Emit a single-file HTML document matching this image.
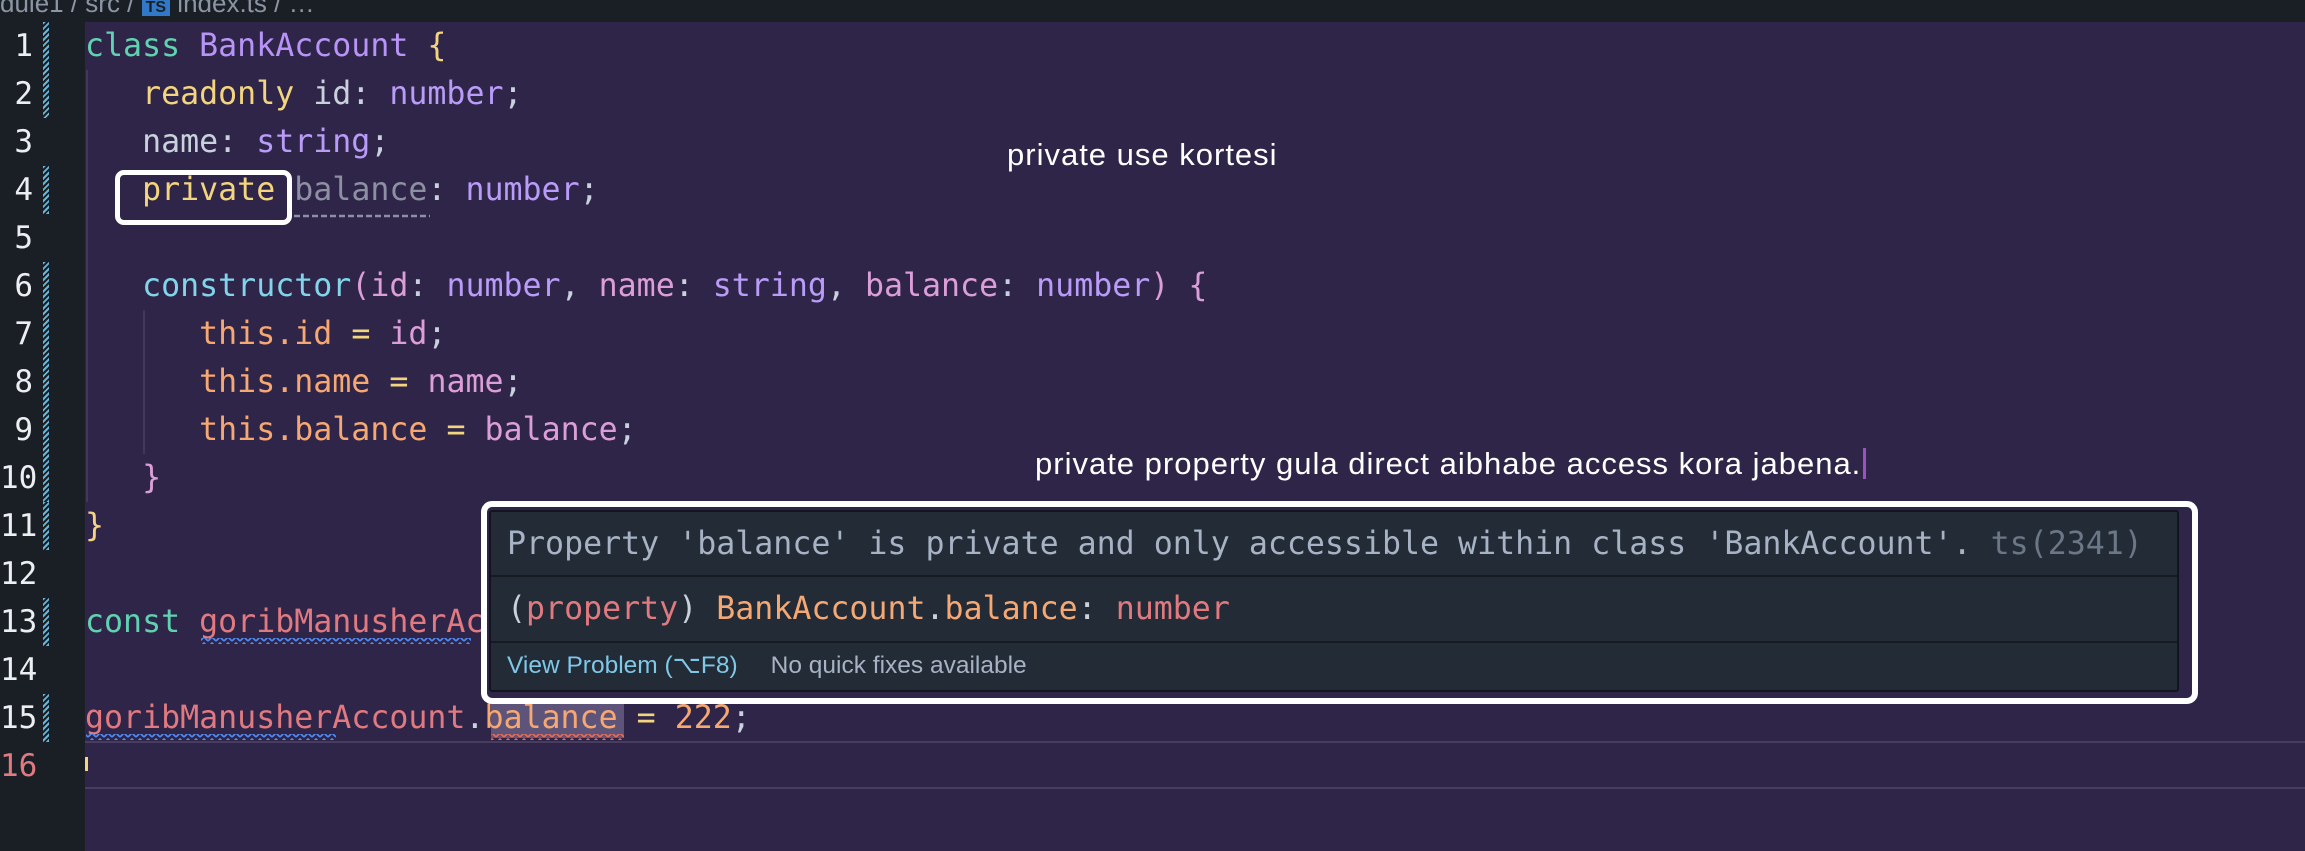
<!DOCTYPE html>
<html><head><meta charset="utf-8"><style>
*{margin:0;padding:0;box-sizing:border-box}
body{width:2305px;height:851px;overflow:hidden;background:#2f2549;position:relative;font-family:"DejaVu Sans Mono","Liberation Mono",monospace}
#bar{position:absolute;left:0;top:0;width:2305px;height:22px;background:#1a1f26;color:#8b95a3;font-family:"Liberation Sans",sans-serif;font-size:26px;line-height:6px;white-space:pre;overflow:hidden}
#gut{position:absolute;left:0;top:22px;width:85px;height:829px;background:#1a1f26}
.ln{position:absolute;left:0;width:33px;text-align:right;color:#eceff2;font-size:31px;line-height:48px;height:48px}
.hat{position:absolute;left:43px;width:6px;background:repeating-linear-gradient(135deg,#6bb6d8 0 2px,#1a1f26 2px 4px)}
.l{position:absolute;left:85px;font-size:31.6px;line-height:48px;height:48px;white-space:pre;color:#c8d1dc}
.kw{color:#5fd3b0}.cl{color:#b794f6}.y{color:#f2d57e}.ty{color:#b99cf8}.fa{color:#8d8fa3}.cy{color:#82d4ea}.pk{color:#dc9ed8}.or{color:#f6a873}.sa{color:#e07a80}
.guide{position:absolute;width:2px;background:#41385c}
.ann{position:absolute;color:#fff;font-family:"Liberation Sans",sans-serif;font-size:31px;letter-spacing:1px;white-space:pre}
</style></head><body>
<div id="bar">dule1 / src / <span style="background:#3178c6;color:#1a1f26;font-size:16px;padding:0 4px;font-weight:bold">TS</span> index.ts / …</div>
<div id="gut"></div>
<div class="ln" style="top:22px">1</div><div class="ln" style="top:70px">2</div><div class="ln" style="top:118px">3</div><div class="ln" style="top:166px">4</div><div class="ln" style="top:214px">5</div><div class="ln" style="top:262px">6</div><div class="ln" style="top:310px">7</div><div class="ln" style="top:358px">8</div><div class="ln" style="top:406px">9</div><div class="ln" style="top:454px">10</div><div class="ln" style="top:502px">11</div><div class="ln" style="top:550px">12</div><div class="ln" style="top:598px">13</div><div class="ln" style="top:646px">14</div><div class="ln" style="top:694px">15</div><div class="ln" style="top:742px;color:#e07a80">16</div>
<div class="hat" style="top:22px;height:96px"></div>
<div class="hat" style="top:166px;height:48px"></div>
<div class="hat" style="top:262px;height:240px"></div>
<div class="hat" style="top:502px;height:48px"></div>
<div class="hat" style="top:598px;height:48px"></div>
<div class="hat" style="top:694px;height:48px"></div>
<div class="guide" style="left:86px;top:70px;height:432px"></div>
<div class="guide" style="left:143px;top:310px;height:144px"></div>
<div style="position:absolute;left:85px;top:741px;width:2220px;height:48px;border-top:2px solid #463d60;border-bottom:2px solid #463d60"></div>
<div style="position:absolute;left:85px;top:757px;width:3px;height:14px;background:#f2d57e"></div>

<div class="l" style="top:22px"><span class="kw">class</span> <span class="cl">BankAccount</span> <span class="y">{</span></div>
<div class="l" style="top:70px">   <span class="y">readonly</span> id: <span class="ty">number</span>;</div>
<div class="l" style="top:118px">   name: <span class="ty">string</span>;</div>
<div class="l" style="top:166px">   <span class="y">private</span> <span class="fa">balance</span>: <span class="ty">number</span>;</div>
<div class="l" style="top:262px">   <span class="cy">constructor</span><span class="pk">(</span><span class="pk">id</span>: <span class="ty">number</span>, <span class="pk">name</span>: <span class="ty">string</span>, <span class="pk">balance</span>: <span class="ty">number</span><span class="pk">)</span> <span class="pk">{</span></div>
<div class="l" style="top:310px">      <span class="or">this.id</span> <span class="y">=</span> <span class="pk">id</span>;</div>
<div class="l" style="top:358px">      <span class="or">this.name</span> <span class="y">=</span> <span class="pk">name</span>;</div>
<div class="l" style="top:406px">      <span class="or">this.balance</span> <span class="y">=</span> <span class="pk">balance</span>;</div>
<div class="l" style="top:454px">   <span class="pk">}</span></div>
<div class="l" style="top:502px"><span class="y">}</span></div>
<div class="l" style="top:598px"><span class="kw">const</span> <span class="sa">goribManusherAccount</span></div>
<div style="position:absolute;left:491px;top:694px;width:133px;height:44px;background:#5e5479"></div>
<div class="l" style="top:694px"><span class="sa">goribManusherAccount</span>.<span class="or">balance</span> <span class="y">=</span> <span class="or">222</span>;</div>
<svg style="position:absolute;left:0;top:0" width="2305" height="851">
<defs><pattern id="sq" width="8" height="6" patternUnits="userSpaceOnUse"><path d="M0 5 L4 1 L8 5" stroke="#4f8ef7" stroke-width="1.6" fill="none"/></pattern>
<pattern id="sr" width="8" height="6" patternUnits="userSpaceOnUse"><path d="M0 5 L4 1 L8 5" stroke="#f06a50" stroke-width="1.6" fill="none"/></pattern></defs>
<rect x="201" y="638" width="270" height="6" fill="url(#sq)"/>
<rect x="86" y="734" width="250" height="6" fill="url(#sq)"/>
<rect x="491" y="734" width="133" height="6" fill="url(#sr)"/>
<line x1="294" y1="216" x2="430" y2="216" stroke="#8d8fa3" stroke-width="2.5" stroke-dasharray="6 3"/>
</svg>
<div style="position:absolute;left:115px;top:170px;width:177px;height:55px;border:5px solid #fff;border-radius:9px"></div>

<div class="ann" style="left:1007px;top:137px">private use kortesi</div>
<div class="ann" style="left:1035px;top:446px">private property gula direct aibhabe access kora jabena.<span style="display:inline-block;width:3px;height:31px;background:#a04fc0;vertical-align:-5px;margin-left:2px"></span></div>

<div style="position:absolute;left:481px;top:501px;width:1717px;height:203px;border:6px solid #fff;border-radius:11px;background:#2f2549"></div>
<div style="position:absolute;left:489px;top:510px;width:1690px;height:182px;background:#222b36;border:2px solid #12161c;border-radius:3px">
 <div style="height:65px;border-bottom:2px solid #161b22;padding-left:16px;line-height:64px;font-size:31.6px;white-space:pre;color:#a7b3c4">Property 'balance' is private and only accessible within class 'BankAccount'.<span style="color:#6b7787"> ts(2341)</span></div>
 <div style="height:66px;border-bottom:2px solid #161b22;padding-left:16px;line-height:64px;font-size:31.6px;white-space:pre;color:#c8d1dc">(<span class="sa">property</span>) <span class="or">BankAccount</span>.<span class="or">balance</span>: <span class="sa">number</span></div>
 <div style="padding-left:16px;line-height:46px;font-family:'Liberation Sans',sans-serif;font-size:24.5px;white-space:pre;color:#a7b3c4"><span style="color:#7fc8e8">View Problem (⌥F8)</span><span style="display:inline-block;width:33px"></span>No quick fixes available</div>
</div>
</body></html>
